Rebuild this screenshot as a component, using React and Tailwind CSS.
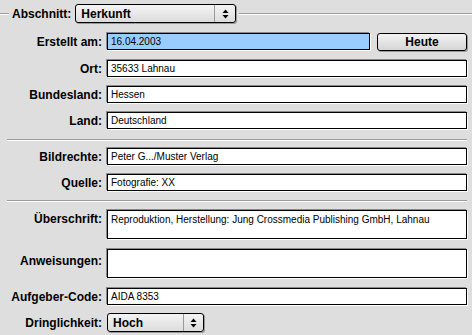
import React from 'react';

const label = "w-[102px] shrink-0 text-right text-[12px] font-bold text-black leading-none";
const field = "flex-1 bg-white border border-black shadow-[-1px_-1px_0_#8a8a8a,1px_1px_0_#ffffff] text-[10px] text-black px-[3px] leading-none";

const UpDown = () => (
    <svg width="7" height="10" viewBox="0 0 7 10" className="text-black">
        <path d="M3.5 0.5 L6.5 4 L0.5 4 Z" fill="currentColor" />
        <path d="M3.5 9.5 L6.5 6 L0.5 6 Z" fill="currentColor" />
    </svg>
);

const Popup = ({ value, width, arrowAt }) => (
    <div
        className="h-[19px] flex items-stretch rounded-[3px] border border-black bg-gradient-to-b from-[#f4f4f4] to-[#dcdcdc] shadow-[1px_1px_0_#9a9a9a]"
        style={{ width }}
    >
        <div className="flex-1 flex items-center pl-[5px] text-[12px] font-bold leading-none">{value}</div>
        <div className="w-px bg-[#9a9a9a]" />
        <div className="flex items-center justify-center" style={{ width: arrowAt }}>
            <UpDown />
        </div>
    </div>
);

const Row = ({ name, top, children, h = 'h-[17px]', align = 'items-center', labelPad = '' }) => (
    <div className={`flex ${align} gap-[5px] ${h}`} style={{ marginTop: top }}>
        <div className={`${label} ${labelPad}`}>{name}</div>
        {children}
    </div>
);

const Field = ({ value, tall }) => (
    <div className={`${field} ${tall ? 'h-[29px] pt-[4px]' : 'h-[17px] flex items-center'}`}>
        {value}
    </div>
);

const Sep = ({ top }) => (
    <div className="ml-[7px] h-[2px] border-t border-[#9c9c9c] border-b border-b-white" style={{ marginTop: top }} />
);

export default function App() {
    return (
        <div className="w-[472px] h-[335px] bg-[#dedede] overflow-hidden pr-[5px]" style={{ fontFamily: '"Liberation Sans", Arial, sans-serif' }}>
            <div className="flex items-center h-[19px] mt-[4px]">
                <div className="w-[9px] h-[2px] border-t border-[#9c9c9c] border-b border-b-white" />
                <div className="ml-[3px] mr-[4px] text-[12px] font-bold leading-none">Abschnitt:</div>
                <Popup value="Herkunft" width={161} arrowAt={20} />
                <div className="flex-1 ml-[3px] -mr-[5px] h-[2px] border-t border-[#9c9c9c] border-b border-b-white" />
            </div>

            <Row name="Erstellt am:" top={10}>
                <div className={`${field} h-[17px] flex items-center !bg-[#99ccff] !flex-none w-[263px]`}>16.04.2003</div>
                <button className="ml-[2px] w-[90px] h-[18px] rounded-[3px] border border-black bg-gradient-to-b from-[#f2f2f2] to-[#d6d6d6] shadow-[1px_1px_0_#9a9a9a] text-[12px] font-bold leading-none">
                    Heute
                </button>
            </Row>
            <Row name="Ort:" top={10}><Field value="35633 Lahnau" /></Row>
            <Row name="Bundesland:" top={9}><Field value="Hessen" /></Row>
            <Row name="Land:" top={9}><Field value="Deutschland" /></Row>

            <Sep top={10} />

            <Row name="Bildrechte:" top={7}><Field value="Peter G.../Muster Verlag" /></Row>
            <Row name="Quelle:" top={9}><Field value="Fotografie: XX" /></Row>

            <Sep top={9} />

            <Row name="Überschrift:" top={8} h="h-[29px]" align="items-start" labelPad="pt-[3px]">
                <Field tall value="Reproduktion, Herstellung: Jung Crossmedia Publishing GmbH, Lahnau" />
            </Row>
            <Row name="Anweisungen:" top={10} h="h-[29px]" align="items-start" labelPad="pt-[6px]">
                <Field tall value="" />
            </Row>
            <Row name="Aufgeber-Code:" top={10}><Field value="AIDA 8353" /></Row>

            <div className="flex items-center gap-[5px] h-[19px] mt-[8px]">
                <div className={label}>Dringlichkeit:</div>
                <Popup value="Hoch" width={97} arrowAt={19} />
            </div>
        </div>
    );
}
